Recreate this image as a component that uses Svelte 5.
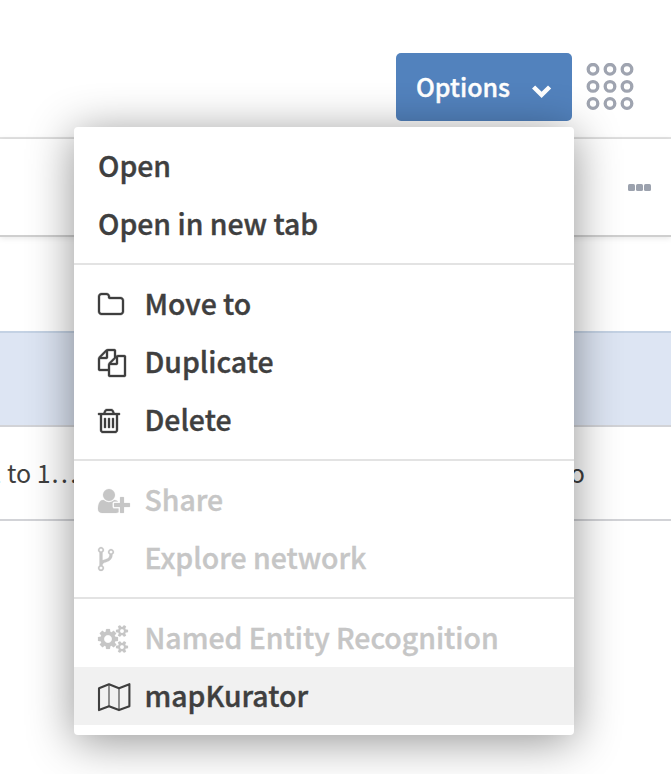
<script>
  const icons = {
    folder: { w: 1792, x: 64, d: 'M1600 1312v-704q0-40-28-68t-68-28h-704q-40 0-68-28t-28-68v-64q0-40-28-68t-68-28h-320q-40 0-68 28t-28 68v960q0 40 28 68t68 28h1216q40 0 68-28t28-68zm128-704v704q0 92-66 158t-158 66h-1216q-92 0-158-66t-66-158v-960q0-92 66-158t158-66h320q92 0 158 66t66 158v32h672q92 0 158 66t66 158z' },
    files: { w: 1792, x: 0, d: 'M1696 384q40 0 68 28t28 68v1216q0 40-28 68t-68 28h-960q-40 0-68-28t-28-68v-288h-544q-40 0-68-28t-28-68v-672q0-40 20-88t48-76l408-408q28-28 76-48t88-20h416q40 0 68 28t28 68v328q68-40 128-40h416zm-544 213l-299 299h299v-299zm-640-384l-299 299h299v-299zm196 647l316-316v-416h-384v416q0 40-28 68t-68 28h-416v640h512v-256q0-40 20-88t48-76zm956 804v-1152h-384v416q0 40-28 68t-68 28h-416v640h896z' },
    trash: { w: 1792, x: 192, d: 'M704 736v576q0 14-9 23t-23 9h-64q-14 0-23-9t-9-23v-576q0-14 9-23t23-9h64q14 0 23 9t9 23zm256 0v576q0 14-9 23t-23 9h-64q-14 0-23-9t-9-23v-576q0-14 9-23t23-9h64q14 0 23 9t9 23zm256 0v576q0 14-9 23t-23 9h-64q-14 0-23-9t-9-23v-576q0-14 9-23t23-9h64q14 0 23 9t9 23zm128 724v-948h-896v948q0 22 7 40.5t14.5 27 10.5 8.5h832q3 0 10.5-8.5t14.5-27 7-40.5zm-672-1076h448l-48-117q-7-9-17-11h-317q-10 2-17 11zm928 32v64q0 14-9 23t-23 9h-96v948q0 83-47 143.5t-113 60.5h-832q-66 0-113-58.5t-47-141.5v-952h-96q-14 0-23-9t-9-23v-64q0-14 9-23t23-9h309l70-167q15-37 54-63t79-26h320q40 0 79 26t54 63l70 167h309q14 0 23 9t9 23z' },
    user: { w: 2048, x: 0, d: 'M704 896q-159 0-271.5-112.5t-112.5-271.5 112.5-271.5 271.5-112.5 271.5 112.5 112.5 271.5-112.5 271.5-271.5 112.5zm960 128h352q13 0 22.5 9.5t9.5 22.5v192q0 13-9.5 22.5t-22.5 9.5h-352v352q0 13-9.5 22.5t-22.5 9.5h-192q-13 0-22.5-9.5t-9.5-22.5v-352h-352q-13 0-22.5-9.5t-9.5-22.5v-192q0-13 9.5-22.5t22.5-9.5h352v-352q0-13 9.5-22.5t22.5-9.5h192q13 0 22.5 9.5t9.5 22.5v352zm-736 224q0 52 38 90t90 38h256v238q-68 50-171 50h-874q-121 0-194-69t-73-190q0-53 3.5-103.5t14-109 26.5-108.5 43-97.5 62-81 85.5-53.5 111.5-20q19 0 39 17 79 61 154.5 91.5t164.5 30.5 164.5-30.5 154.5-91.5q20-17 39-17 132 0 217 96h-223q-52 0-90 38t-38 90v192z' },
    fork: { w: 1792, x: 384, d: 'M672 1472q0-40-28-68t-68-28-68 28-28 68 28 68 68 28 68-28 28-68zm0-1152q0-40-28-68t-68-28-68 28-28 68 28 68 68 28 68-28 28-68zm640 128q0-40-28-68t-68-28-68 28-28 68 28 68 68 28 68-28 28-68zm96 0q0 52-26 96.5t-70 69.5q-2 287-226 414-67 38-203 81-128 40-169.5 71t-41.5 100v26q44 25 70 69.5t26 96.5q0 80-56 136t-136 56-136-56-56-136q0-52 26-96.5t70-69.5v-820q-44-25-70-69.5t-26-96.5q0-80 56-136t136-56 136 56 56 136q0 52-26 96.5t-70 69.5v497q54-26 154-57 55-17 87.5-29.5t70.5-31 59-39.5 40.5-51 28-69.5 8.5-91.5q-44-25-70-69.5t-26-96.5q0-80 56-136t136-56 136 56 56 136z' },
    cogs: { w: 1920, x: 0, d: 'M896 896q0-106-75-181t-181-75-181 75-75 181 75 181 181 75 181-75 75-181zm768 512q0-52-38-90t-90-38-90 38-38 90q0 53 37.5 90.5t90.5 37.5 90.5-37.5 37.5-90.5zm0-1024q0-52-38-90t-90-38-90 38-38 90q0 53 37.5 90.5t90.5 37.5 90.5-37.5 37.5-90.5zm-384 421v185q0 10-7 19.5t-16 10.5l-155 24q-11 35-32 76 34 48 90 115 7 11 7 20 0 12-7 19-23 30-82.5 89.5t-78.5 59.5q-11 0-21-7l-115-90q-37 19-77 31-11 108-23 155-7 24-30 24h-186q-11 0-20-7.5t-10-17.5l-23-153q-34-10-75-31l-118 89q-7 7-20 7-11 0-21-8-144-133-144-160 0-9 7-19 10-14 41-53t47-61q-23-44-35-82l-152-24q-10-1-17-9.5t-7-19.5v-185q0-10 7-19.5t16-10.5l155-24q11-35 32-76-34-48-90-115-7-11-7-20 0-12 7-20 22-30 82-89t79-59q11 0 21 7l115 90q34-18 77-32 11-108 23-154 7-24 30-24h186q11 0 20 7.5t10 17.5l23 153q34 10 75 31l118-89q8-7 20-7 11 0 21 8 144 133 144 160 0 8-7 19-12 16-42 54t-45 60q23 48 34 82l152 23q10 2 17 10.5t7 19.5zm640 533v140q0 16-149 31-12 27-30 52 51 113 51 138 0 4-4 7-122 71-124 71-8 0-46-47t-52-68q-20 2-30 2t-30-2q-14 21-52 68t-46 47q-2 0-124-71-4-3-4-7 0-25 51-138-18-25-30-52-149-15-149-31v-140q0-16 149-31 13-29 30-52-51-113-51-138 0-4 4-7 4-2 35-20t59-34 30-16q8 0 46 46.5t52 67.5q20-2 30-2t30 2q51-71 92-112l6-2q4 0 124 70 4 3 4 7 0 25-51 138 17 23 30 52 149 15 149 31zm0-1024v140q0 16-149 31-12 27-30 52 51 113 51 138 0 4-4 7-122 71-124 71-8 0-46-47t-52-68q-20 2-30 2t-30-2q-14 21-52 68t-46 47q-2 0-124-71-4-3-4-7 0-25 51-138-18-25-30-52-149-15-149-31v-140q0-16 149-31 13-29 30-52-51-113-51-138 0-4 4-7 4-2 35-20t59-34 30-16q8 0 46 46.5t52 67.5q20-2 30-2t30 2q51-71 92-112l6-2q4 0 124 70 4 3 4 7 0 25-51 138 17 23 30 52 149 15 149 31z' }
  };

  const groups = [
    [{ label: 'Open' }, { label: 'Open in new tab' }],
    [
      { label: 'Move to', icon: 'folder' },
      { label: 'Duplicate', icon: 'files' },
      { label: 'Delete', icon: 'trash' }
    ],
    [
      { label: 'Share', icon: 'user', disabled: true },
      { label: 'Explore network', icon: 'fork', disabled: true }
    ],
    [
      { label: 'Named Entity Recognition', icon: 'cogs', disabled: true },
      { label: 'mapKurator', icon: 'map', active: true }
    ]
  ];
</script>

<main class="page">
  <header class="toolbar">
    <button class="options">
      <span>Options</span>
      <svg width="20" height="14" viewBox="0 0 20 14"><path d="M1.6 3 9.6 10.8 17.6 3" fill="none" stroke="#fff" stroke-width="4.5" /></svg>
    </button>
    <svg class="grid" width="48" height="48" viewBox="0 0 48 48">
      {#each [6.3, 23.4, 40.5] as cy}
        {#each [7, 24, 41] as cx}
          <circle {cx} {cy} r="4.8" />
        {/each}
      {/each}
    </svg>
  </header>
  <div class="columns">
    <span class="dots"><i></i><i></i><i></i></span>
  </div>
  <div class="gap"></div>
  <div class="row selected"></div>
  <div class="row">
    <span class="left">1 to 1…</span>
    <span class="right">o</span>
  </div>

  <nav class="menu">
    {#each groups as group}
      <ul>
        {#each group as item}
          <li class:disabled={item.disabled} class:active={item.active}>
            {#if item.icon === 'map'}
              <span class="icon">
                <svg width="34" height="30" viewBox="0 0 34 30">
                  <path d="M1 5.2 11 1.2 21 5.2 31.4 1.2V23.2L21 27.1 11 23.2 1 27.1Z" fill="none" stroke="currentColor" stroke-width="2.1" stroke-linejoin="round" />
                  <path d="M11 1.2V23.2M21 5.2V27.1" stroke="currentColor" stroke-width="1.1" />
                </svg>
              </span>
            {:else if item.icon}
              <span class="icon">
                <svg width={icons[item.icon].w / 64} height="28" viewBox="{icons[item.icon].x} 0 {icons[item.icon].w} 1792"><path class="glyph" d={icons[item.icon].d} /></svg>
              </span>
            {/if}
            <span class="label">{item.label}</span>
          </li>
        {/each}
      </ul>
    {/each}
  </nav>
</main>

<style>
  :global(body) { background: #fff; }
  .page {
    position: relative;
    width: 671px;
    height: 774px;
    overflow: hidden;
    background: #fff;
    color: #3f3f3f;
    font-family: 'Noto Sans CJK SC', 'Noto Sans', sans-serif;
  }
  .toolbar {
    box-sizing: border-box;
    height: 139px;
    padding: 53px 37px 0 0;
    display: flex;
    justify-content: flex-end;
    gap: 14px;
    border-bottom: 2px solid #e3e3e3;
  }
  .options {
    width: 176px;
    height: 68px;
    padding: 0 20px;
    border: 0;
    border-radius: 5px;
    background: #5282bd;
    color: #fff;
    display: flex;
    align-items: center;
    justify-content: space-between;
    font: 500 25px/66px 'Noto Sans CJK SC', sans-serif;
    -webkit-text-stroke: 0.4px currentColor;
  }
  .options span { margin-top: -2px; }
  .options svg { margin-top: 7px; }
  .grid { margin-top: 10px; fill: none; stroke: #9fa4b0; stroke-width: 3.3; }
  .columns {
    box-sizing: border-box;
    height: 98px;
    padding: 0 20px;
    display: flex;
    justify-content: flex-end;
    align-items: center;
    border-bottom: 2px solid #cfcfcf;
    box-shadow: 0 1px 6px rgba(0, 0, 0, 0.1);
  }
  .dots { display: flex; gap: 1px; }
  .dots i { width: 7px; height: 7px; border-radius: 1.5px; background: #9ca2ae; }
  .gap { height: 94px; }
  .row {
    box-sizing: border-box;
    height: 94px;
    display: flex;
    justify-content: space-between;
    border-bottom: 2px solid #d2d3d7;
    font-size: 25px;
    line-height: 90px;
  }
  .selected { height: 96px; background: #dde5f3; border-top: 2px solid #c4d2e4; }
  .left { margin-left: -12.5px; }
  .right { margin-right: 86px; }
  .menu {
    position: absolute;
    left: 74px;
    top: 127px;
    width: 500px;
    border-radius: 4px;
    background: #fff;
    box-shadow: 0 6px 46px rgba(0, 0, 0, 0.43);
  }
  ul { margin: 0; padding: 10px 0; list-style: none; }
  ul + ul { border-top: 2px solid #e3e3e3; }
  li {
    height: 58px;
    padding-left: 24px;
    display: flex;
    font-size: 28.4px;
    font-weight: 500;
    line-height: 56px;
    white-space: nowrap;
  }
  .label { -webkit-text-stroke: 0.4px currentColor; }
  .icon { width: 46.5px; padding-top: 16px; line-height: 0; }
  .icon svg { margin-left: -0.4px; overflow: visible; }
  .glyph { fill: currentColor; stroke: currentColor; stroke-width: 22; }
  .disabled { color: #c6c6c6; }
  .disabled .glyph { stroke-width: 12; }
  .active { background: #f1f1f1; }
</style>
